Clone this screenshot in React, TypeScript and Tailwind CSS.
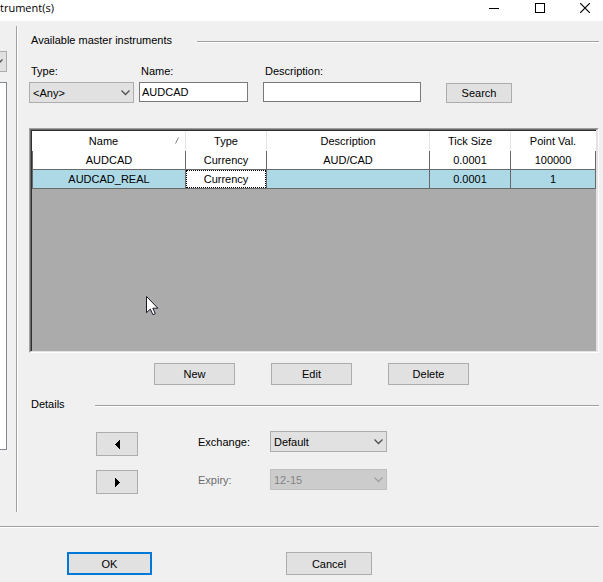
import type { ComponentProps, ReactNode } from "react";

const INSTRUMENTS = [
  { name: "AUDCAD", type: "Currency", description: "AUD/CAD", tickSize: "0.0001", pointValue: "100000" },
  { name: "AUDCAD_REAL", type: "Currency", description: "", tickSize: "0.0001", pointValue: "1" },
];

const SELECTED = "AUDCAD_REAL";

export default function App() {
  return (
    <div className="flex min-h-screen flex-col bg-[#f0f0f0] font-['Liberation_Sans',sans-serif] text-[11px] leading-4 text-black">
      <TitleBar />

      <div className="flex gap-2 pt-[5px] pr-1">
        <InstrumentList />
        <div className="w-[2px] shrink-0 border-r border-l border-r-white border-l-[#a0a0a0]" />

        <main className="flex min-w-0 grow flex-col pt-[1px] pb-[18px] pl-[3px]">
          <section>
            <SectionHeading title="Available master instruments" gap="gap-[25px]" />
            <form className="mt-[15px] flex items-start" onSubmit={(e) => e.preventDefault()}>
              <div className="w-[105px]">
                <FieldLabel htmlFor="type">Type:</FieldLabel>
                <Select id="type" defaultValue="any">
                  <option value="any">&lt;Any&gt;</option>
                </Select>
              </div>
              <div className="ml-[5px] w-[109px]">
                <FieldLabel htmlFor="name">Name:</FieldLabel>
                <TextBox id="name" defaultValue="AUDCAD" />
              </div>
              <div className="ml-[15px] w-[158px]">
                <FieldLabel htmlFor="description">Description:</FieldLabel>
                <TextBox id="description" />
              </div>
              <Button className="mt-5 ml-[25px] h-5 w-[66px]">Search</Button>
            </form>
          </section>

          <InstrumentGrid />

          <div className="mt-[10px] flex gap-9 pl-[125px]">
            <Button className="h-[22px] w-[81px]">New</Button>
            <Button className="h-[22px] w-[81px]">Edit</Button>
            <Button className="h-[22px] w-[81px]">Delete</Button>
          </div>

          <section className="mt-[6px]">
            <SectionHeading title="Details" gap="gap-[30px]" />
            <div className="mt-[19px] flex pl-[67px]">
              <div className="flex flex-col gap-[14px] pt-[1px]">
                <Button className="h-6 w-[42px]" aria-label="Remove instrument">
                  <svg width="5" height="9" viewBox="0 0 5 9" className="mx-auto" shapeRendering="crispEdges">
                    <path d="M5 0v9L0 5V4z" />
                  </svg>
                </Button>
                <Button className="h-6 w-[42px]" aria-label="Add instrument">
                  <svg width="5" height="9" viewBox="0 0 5 9" className="mx-auto" shapeRendering="crispEdges">
                    <path d="M0 0v9l5-4V4z" />
                  </svg>
                </Button>
              </div>
              <div className="ml-[60px] flex flex-col gap-[17px]">
                <div className="flex items-center">
                  <label htmlFor="exchange" className="w-[72px]">Exchange:</label>
                  <div className="w-[117px]">
                    <Select id="exchange" defaultValue="default">
                      <option value="default">Default</option>
                    </Select>
                  </div>
                </div>
                <div className="flex items-center">
                  <label htmlFor="expiry" className="w-[72px] text-[#6d6d6d]">Expiry:</label>
                  <div className="w-[117px]">
                    <Select id="expiry" defaultValue="12-15" disabled>
                      <option value="12-15">12-15</option>
                    </Select>
                  </div>
                </div>
              </div>
            </div>
          </section>
        </main>
      </div>

      <footer className="pt-[14px] pr-1">
        <Rule />
        <div className="mt-6 flex gap-[134px] pl-[67px]">
          <button type="submit" className="h-[23px] w-[85px] border-2 border-[#0078d7] bg-[#e1e1e1]">
            OK
          </button>
          <Button className="h-[23px] w-[86px]">Cancel</Button>
        </div>
      </footer>
    </div>
  );
}

function TitleBar() {
  return (
    <header className="flex h-[21px] items-start justify-between overflow-hidden bg-white">
      <h1 className="font-['Open_Sans',sans-serif] text-[11px] leading-4">trument(s)</h1>
      <div className="flex gap-[35px] pt-[3px] pr-[13px]">
        <button type="button" aria-label="Minimize">
          <svg width="11" height="10" viewBox="0 0 11 10" shapeRendering="crispEdges">
            <path d="M0 5.5h10" stroke="black" />
          </svg>
        </button>
        <button type="button" aria-label="Maximize">
          <svg width="10" height="10" viewBox="0 0 10 10" shapeRendering="crispEdges">
            <path d="M.5.5h9v9h-9z" fill="none" stroke="black" />
          </svg>
        </button>
        <button type="button" aria-label="Close">
          <svg width="10" height="10" viewBox="0 0 10 10">
            <path d="M0 0l10 10M10 0L0 10" stroke="black" strokeWidth="1.2" />
          </svg>
        </button>
      </div>
    </header>
  );
}

// Right edge of the instrument list, the rest is scrolled out of the window
function InstrumentList() {
  return (
    <aside className="mr-[1px] flex w-[7px] shrink-0 flex-col items-end overflow-hidden pt-[25px] pb-[62px]">
      <div className="w-[105px]">
        <Select aria-label="Instrument list" />
      </div>
      <div className="mt-[10px] w-[105px] grow border border-[#828790] bg-white" />
    </aside>
  );
}

function InstrumentGrid() {
  return (
    <div className="relative mt-[25px] h-[225px] border border-t-[#a0a0a0] border-r-white border-b-white border-l-[#a0a0a0]">
      <div className="h-full border border-r-2 border-t-[#696969] border-r-[#e3e3e3] border-b-[#e3e3e3] border-l-[#696969]">
        <div className="h-full border-t border-l border-[#303030] bg-[#ababab]">
          <table className="w-full table-fixed border-separate border-spacing-0 text-center">
            <colgroup>
              <col className="w-[154px]" />
              <col className="w-[81px]" />
              <col />
              <col className="w-[81px]" />
              <col className="w-[85px]" />
            </colgroup>
            <thead>
              <tr className="h-5 bg-white">
                <HeaderCell>
                  <span className="relative block pr-[10px]">
                    Name
                    <svg width="5" height="7" viewBox="0 0 5 7" className="absolute top-[4px] right-[5px]">
                      <path d="M.5 6.5l3-6" stroke="#808080" />
                    </svg>
                  </span>
                </HeaderCell>
                <HeaderCell>Type</HeaderCell>
                <HeaderCell>Description</HeaderCell>
                <HeaderCell>Tick Size</HeaderCell>
                <HeaderCell>Point Val.</HeaderCell>
              </tr>
            </thead>
            <tbody>
              {INSTRUMENTS.map((row) => {
                const selected = row.name === SELECTED;
                return (
                  <tr key={row.name} className={selected ? "h-[19px] bg-[#add8e6]" : "h-[19px] bg-white"}>
                    <Cell>{row.name}</Cell>
                    <Cell focused={selected}>{row.type}</Cell>
                    <Cell>{row.description}</Cell>
                    <Cell>{row.tickSize}</Cell>
                    <Cell>{row.pointValue}</Cell>
                  </tr>
                );
              })}
            </tbody>
          </table>
        </div>
      </div>
      <svg width="13" height="20" viewBox="0 0 13 20" className="absolute top-[167px] left-[116px]">
        <path d="M.5.5v16.2l3.8-3.6 2.6 5.6 2.4-1-2.5-5.5h5.1z" fill="white" stroke="#181828" />
      </svg>
    </div>
  );
}

function HeaderCell({ children }: { children: ReactNode }) {
  return (
    <th scope="col" className="border-r border-[#e5e5e5] p-0 font-normal last:border-white">
      {children}
    </th>
  );
}

function Cell({ children, focused }: { children: ReactNode; focused?: boolean }) {
  return (
    <td className="border-r border-b border-[#696969] p-0 first:border-l">
      {focused ? (
        <div className="h-[18px] border border-dotted border-black bg-white">{children}</div>
      ) : (
        children
      )}
    </td>
  );
}

function SectionHeading({ title, gap }: { title: string; gap: string }) {
  return (
    <div className={`flex items-center ${gap}`}>
      <h2 className="pt-[5px] pl-[2px]">{title}</h2>
      <div className="grow pt-[9px]">
        <Rule />
      </div>
    </div>
  );
}

function Rule() {
  return <div className="h-[2px] border-t border-b border-t-[#a0a0a0] border-b-white" />;
}

function FieldLabel({ htmlFor, children }: { htmlFor: string; children: ReactNode }) {
  return (
    <label htmlFor={htmlFor} className="mb-[3px] block pl-[2px]">
      {children}
    </label>
  );
}

function TextBox(props: ComponentProps<"input">) {
  return <input type="text" className="block h-5 w-full border border-[#7a7a7a] bg-white px-[2px]" {...props} />;
}

function Select({ children, ...props }: ComponentProps<"select">) {
  return (
    <div className="relative">
      <select
        className="block h-[21px] w-full appearance-none border border-[#adadad] bg-[#e1e1e1] pl-[3px] disabled:border-[#bfbfbf] disabled:bg-[#cccccc] disabled:text-[#838383] disabled:opacity-100"
        {...props}
      >
        {children}
      </select>
      <svg
        width="9"
        height="6"
        viewBox="0 0 9 6"
        className="pointer-events-none absolute top-[8px] right-[4px]"
        fill="none"
        stroke={props.disabled ? "#a0a0a0" : "#505050"}
        strokeWidth="1.3"
      >
        <path d="M.5.5l4 4 4-4" />
      </svg>
    </div>
  );
}

function Button({ className, ...props }: ComponentProps<"button">) {
  return <button type="button" className={`border border-[#adadad] bg-[#e1e1e1] ${className}`} {...props} />;
}
